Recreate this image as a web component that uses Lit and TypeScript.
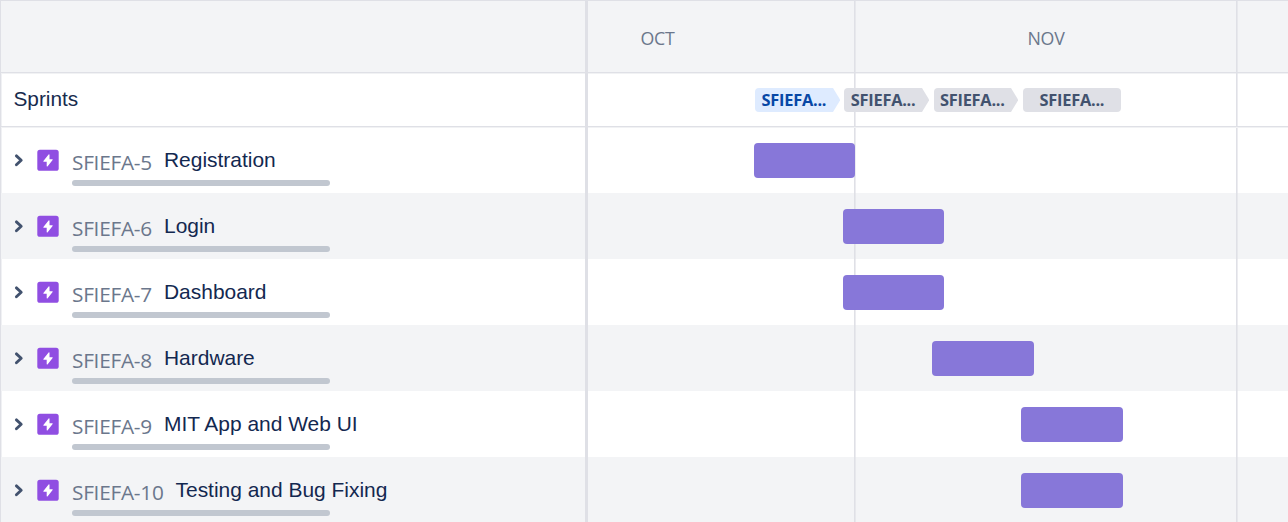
import { LitElement, html, css } from "lit";
import { customElement } from "lit/decorators.js";
import { classMap } from "lit/directives/class-map.js";

const EPICS = [
  { key: "SFIEFA-5", name: "Registration", start: 165.7 },
  { key: "SFIEFA-6", name: "Login", start: 254.8 },
  { key: "SFIEFA-7", name: "Dashboard", start: 254.8 },
  { key: "SFIEFA-8", name: "Hardware", start: 344 },
  { key: "SFIEFA-9", name: "MIT App and Web UI", start: 433 },
  { key: "SFIEFA-10", name: "Testing and Bug Fixing", start: 433 },
];

const SPRINTS = [
  { active: true, last: false },
  { active: false, last: false },
  { active: false, last: false },
  { active: false, last: true },
];

@customElement("app-root")
export class AppRoot extends LitElement {
  static styles = css`
    :host {
      display: block;
      height: 522px;
      overflow: hidden;
      background: #fff;
      font-family: "Liberation Sans", Arial, sans-serif;
      color: #172b4d;
    }
    * { box-sizing: border-box; }
    .roadmap {
      display: grid;
      grid-template-columns: 588px 1fr;
      height: 522px;
      overflow: hidden;
      border-top: 1px solid #dfe0e6;
    }
    .side {
      border-left: 1px solid #dfe0e6;
      border-right: 3px solid #dfe0e6;
      box-shadow: inset 1px 0 #f0f1f4;
      overflow: hidden;
    }
    .head {
      height: 72px;
      background: #f3f4f6;
      border-bottom: 1px solid #dfe0e6;
      box-shadow: 0 1px #f1f2f4;
    }
    .sprints {
      height: 54px;
      border-bottom: 1px solid #dfe0e6;
      box-shadow: 0 1px #f1f2f4;
    }
    .side .sprints {
      padding: 14px 0 0 12.5px;
      font-size: 20.8px;
      line-height: 23px;
    }
    .row { height: 66px; }
    .row:nth-child(even) { background: #f3f4f6; }
    .epic {
      display: flex;
      padding: 0 0 0 12px;
    }
    .chevron {
      width: 12px;
      height: 16px;
      margin-top: 25px;
      flex: none;
    }
    .bolt {
      width: 22px;
      height: 22px;
      margin: 22px 13px 0 12px;
      flex: none;
    }
    .text { flex: none; }
    .title {
      display: flex;
      height: 53px;
      white-space: nowrap;
    }
    .key {
      font-family: "Open Sans", sans-serif;
      font-size: 20.8px;
      letter-spacing: -0.26px;
      line-height: 28px;
      padding-top: 21px;
      color: #6b778c;
      min-width: 80px;
      margin-right: 12px;
    }
    .name {
      font-size: 20.95px;
      line-height: 24px;
      padding-top: 21px;
      color: #132850;
    }
    .progress {
      width: 258px;
      height: 6px;
      border-radius: 3px;
      background: #c1c7d0;
    }
    .timeline {
      display: grid;
      overflow: hidden;
    }
    .months, .lanes { grid-area: 1 / 1; min-width: 0; }
    .months {
      display: grid;
      grid-template-columns: 267px 382px 1fr;
      z-index: 1;
    }
    .month {
      border-right: 1px solid #dfe0e6;
      box-shadow: 1px 0 rgba(223, 224, 230, 0.6);
      font-family: "Open Sans", sans-serif;
      font-size: 17.8px;
      letter-spacing: -0.3px;
      line-height: 24px;
      padding: 25px 0 0 1px;
      color: #6b778c;
      text-align: center;
    }
    .month:first-child { text-align: left; padding-left: 52.5px; }
    .month:last-child { border: 0; }
    .track {
      position: relative;
      z-index: 2;
      display: flex;
      gap: 4.4px;
      padding: 15px 0 0 167.2px;
    }
    .sprint {
      display: flex;
      width: 84.8px;
      height: 24px;
      color: #42526e;
      fill: #dfe0e6;
    }
    .label {
      flex: 1;
      border-radius: 4px 0 0 4px;
      background: #dfe0e6;
      font-family: "Open Sans", sans-serif;
      font-weight: 700;
      font-size: 16.4px;
      letter-spacing: -0.25px;
      line-height: 24px;
      text-align: center;
      white-space: nowrap;
    }
    .tip { width: 7.3px; height: 24px; flex: none; }
    .active { color: #0747a6; fill: #deebff; }
    .active .label { background: #deebff; }
    .last { width: 98.3px; }
    .last .label { border-radius: 4px; }
    .lane { padding-top: 15.5px; }
    .bar {
      position: relative;
      z-index: 2;
      width: 101.6px;
      height: 35.5px;
      border-radius: 4px;
      background: #8777d9;
    }
  `;

  render() {
    return html`
      <div class="roadmap">
        <div class="side">
          <div class="head"></div>
          <div class="sprints">Sprints</div>
          <div class="rows">
            ${EPICS.map((e) => html`
              <div class="row epic">
                <svg class="chevron" viewBox="0 0 12 16">
                  <path d="M3.4 3.9 L8.2 8.3 L3.4 12.7" fill="none" stroke="#42526e" stroke-width="2.9" stroke-linecap="round" stroke-linejoin="round"/>
                </svg>
                <svg class="bolt" viewBox="0 0 22 22">
                  <rect x="0.3" y="0.8" width="21.4" height="21" rx="2.6" fill="#904ee2"/>
                  <path d="M11.6 5.6 L6.4 11.9 Q6 12.7 6.8 12.7 H9.7 V16.9 Q9.9 18 10.7 17.2 L15.6 11 Q16.1 10.2 15.2 10.2 H12.5 V6 Q12.4 4.9 11.6 5.6 Z" fill="#fff"/>
                </svg>
                <div class="text">
                  <div class="title">
                    <span class="key">${e.key}</span>
                    <span class="name">${e.name}</span>
                  </div>
                  <div class="progress"></div>
                </div>
              </div>`)}
          </div>
        </div>
        <div class="timeline">
          <div class="months">
            <div class="month">OCT</div>
            <div class="month">NOV</div>
            <div class="month"></div>
          </div>
          <div class="lanes">
            <div class="head"></div>
            <div class="sprints track">
              ${SPRINTS.map((s) => html`
                <div class=${classMap({ sprint: true, active: s.active, last: s.last })}>
                  <div class="label">SFIEFA...</div>
                  ${s.last ? "" : html`<svg class="tip" viewBox="0 0 7.3 24"><path d="M0 0 L7.3 12 L0 24 Z"/></svg>`}
                </div>`)}
            </div>
            <div class="rows">
              ${EPICS.map((e) => html`
                <div class="row lane">
                  <div class="bar" style="margin-left:${e.start}px"></div>
                </div>`)}
            </div>
          </div>
        </div>
      </div>`;
  }
}
